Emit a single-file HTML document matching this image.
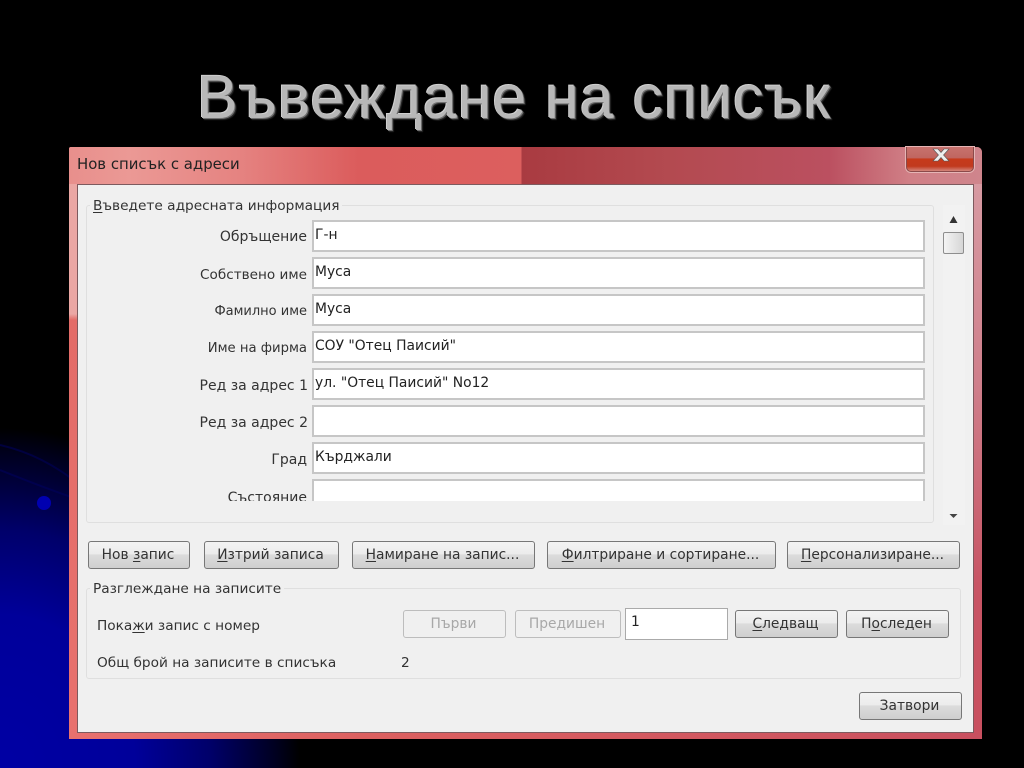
<!DOCTYPE html>
<html lang="bg"><head><meta charset="utf-8"><title>Въвеждане на списък</title>
<style>
*{box-sizing:border-box}
html,body{margin:0;padding:0}
body{width:1024px;height:768px;overflow:hidden;position:relative;background:#000;font-family:"DejaVu Sans","Liberation Sans",sans-serif}
#wrap{position:absolute;left:0;top:0;width:1024px;height:768px;filter:blur(.35px)}
#bg{position:absolute;left:0;top:0;width:1024px;height:768px;background:radial-gradient(ellipse 300px 340px at 0 768px,#0000a4 0,#00009a 45%,#00006a 70%,#000020 92%,#000 100%)}
#swoosh{position:absolute;left:0;top:0}
h1{position:absolute;left:197px;top:62px;margin:0;font:400 61px/70px "Liberation Sans",sans-serif;color:#b8b8b8;white-space:nowrap;text-shadow:1px 1px 0 #707070,-1px -1px 0 #cfcfcf,2px 2px 1px #2a2a2a;letter-spacing:.95px}
#win{position:absolute;left:69px;top:147px;width:913px;height:592px;background:#dd6664;border-radius:2px 5px 0 0;overflow:hidden}
#t1{position:absolute;left:0;top:0;width:913px;height:37px;background:linear-gradient(90deg,#e88f8c 0,#eb9995 60px,#e58381 170px,#db5c5c 290px,#dc5f5e 452px,#a93b41 453px,#b34a50 600px,#bb5060 760px,#d07f86 840px,#cf858c 913px)}
#side-l{position:absolute;left:0;top:37px;width:8px;height:555px;background:linear-gradient(180deg,#eba7a4 0,#eba7a4 130px,#e36c68 136px,#e8716e 555px)}
#side-r{position:absolute;right:0;top:37px;width:8px;height:555px;background:linear-gradient(180deg,#d79aa2 0,#cf7f8b 200px,#c85565 400px,#c9505f 555px)}
#bot{position:absolute;left:0;bottom:0;width:913px;height:6px;background:linear-gradient(90deg,#e8716e 0,#dc6060 300px,#c9505f 913px)}
#client{position:absolute;left:77px;top:184px;width:897px;height:549px;background:#f0f0f0;border:1px solid #7d5a5e}
#title{position:absolute;left:77px;top:155px;font-size:14.9px;line-height:18px;color:#222;white-space:nowrap}
#close{position:absolute;left:906px;top:147px;width:68px;height:25px;border:1px solid #8b4a4a;border-top:0;border-radius:0 0 5px 5px;background:linear-gradient(180deg,#c7726e 0,#c06660 45%,#c63a1c 50%,#c13a1e 80%,#d4857c 100%);box-shadow:0 0 0 1px #e6b5b5}
#close svg{position:absolute;left:23px;top:1px}
.a{position:absolute;white-space:nowrap;color:#333;font-size:13.7px;line-height:18px}
.l{font-size:14px}
.r{text-align:right}
.gb{position:absolute;border:1px solid #dfdfdf;border-radius:3px}
.in{position:absolute;left:312px;width:613px;height:32px;background:#fff;border:2px solid #c6c6c6;font-size:13.85px;line-height:18px;color:#222;padding:4px 0 0 1px;white-space:nowrap}
.b{position:absolute;height:28px;border:1px solid #777;border-radius:3px;background:linear-gradient(180deg,#f3f3f3 0,#ececec 45%,#dcdcdc 50%,#cfcfcf 100%);font-size:13.8px;line-height:26px;text-align:center;color:#333;white-space:nowrap;padding-right:2px}
.k{line-height:27px}
.d{border-color:#bdbdbd;background:#f0f0f0;color:#a8a8a8}
u{text-decoration-thickness:1px;text-underline-offset:2px}
</style></head><body><div id="wrap">
<div id="bg"></div>
<svg id="swoosh" width="80" height="768" viewBox="0 0 80 768" fill="none"><path d="M0 445C30 452 55 465 80 485" stroke="#000050" stroke-width="2" opacity=".7"/><path d="M0 470C25 480 50 490 80 500" stroke="#00005c" stroke-width="2" opacity=".6"/><circle cx="44" cy="503" r="7" fill="#0000b0"/></svg>
<h1>Въвеждане на списък</h1>
<div id="win"><div id="t1"></div><div id="side-l"></div><div id="side-r"></div><div id="bot"></div></div>
<div id="client"></div>
<div id="title">Нов списък с адреси</div>
<div id="close"><svg width="22" height="14" viewBox="0 0 22 14"><path d="M3 1H8L11 4.500 14 1H19L13.500 7 19 13H14L11 9.500 8 13H3L8.500 7Z" fill="#eee" stroke="#555" stroke-width=".6"/></svg></div>

<div class="gb" style="left:86px;top:205px;width:848px;height:318px"></div>
<div class="a" style="left:90px;top:197px;background:#f0f0f0;padding:0 3px"><u>В</u>ъведете адресната информация</div>

<div class="in" style="top:220px">Г-н</div>
<div class="in" style="top:257px">Муса</div>
<div class="in" style="top:294px">Муса</div>
<div class="in" style="top:331px">СОУ "Отец Паисий"</div>
<div class="in" style="top:368px">ул. "Отец Паисий" No12</div>
<div class="in" style="top:405px"></div>
<div class="in" style="top:442px">Кърджали</div>
<div class="in" style="top:479px;height:22px;border-bottom:0"></div>

<div class="a r l" style="left:100px;width:207px;top:228px">Обръщение</div>
<div class="a r l" style="left:100px;width:207px;top:266px;font-size:13.6px">Собствено име</div>
<div class="a r l" style="left:100px;width:207px;top:303px;font-size:13px">Фамилно име</div>
<div class="a r l" style="left:100px;width:207px;top:340px;font-size:13.2px">Име на фирма</div>
<div class="a r l" style="left:100px;width:208px;top:377px">Ред за адрес 1</div>
<div class="a r l" style="left:100px;width:208px;top:414px">Ред за адрес 2</div>
<div class="a r l" style="left:100px;width:207px;top:451px">Град</div>
<div class="a r l" style="left:100px;width:207px;top:489px;height:12px;overflow:hidden">Състояние</div>

<div style="position:absolute;left:943px;top:205px;width:22px;height:320px;background:#f2f2f2"></div>
<svg style="position:absolute;left:943px;top:205px" width="22" height="320"><path d="M10.500 11L6.500 18H14.500Z" fill="#333"/><path d="M6.500 309H14.500L10.500 313Z" fill="#444"/></svg>
<div style="position:absolute;left:943px;top:232px;width:21px;height:22px;border:1px solid #8e8e8e;border-radius:2px;background:linear-gradient(90deg,#f4f4f4,#d6d6d6)"></div>

<div class="b" style="left:88px;top:541px;width:102px">Нов <u>з</u>апис</div>
<div class="b" style="left:204px;top:541px;width:135px"><u>И</u>зтрий записа</div>
<div class="b" style="left:352px;top:541px;width:183px"><u>Н</u>амиране на запис...</div>
<div class="b" style="left:547px;top:541px;width:229px"><u>Ф</u>илтриране и сортиране...</div>
<div class="b" style="left:787px;top:541px;width:173px"><u>П</u>ерсонализиране...</div>

<div class="gb" style="left:86px;top:588px;width:875px;height:91px"></div>
<div class="a" style="left:90px;top:580px;background:#f0f0f0;padding:0 3px">Разглеждане на записите</div>
<div class="a" style="left:97px;top:617px">Пока<u>ж</u>и запис с номер</div>
<div class="a" style="left:97px;top:654px">Общ брой на записите в списъка</div>
<div class="a" style="left:401px;top:654px">2</div>

<div class="b d k" style="left:403px;top:610px;width:103px">Първи</div>
<div class="b d k" style="left:515px;top:610px;width:106px">Предишен</div>
<div class="in" style="left:625px;top:608px;width:103px;height:32px;border:1px solid #aaa;padding:4px 0 0 5px">1</div>
<div class="b k" style="left:735px;top:610px;width:103px"><u>С</u>ледващ</div>
<div class="b k" style="left:846px;top:610px;width:103px">П<u>о</u>следен</div>
<div class="b k" style="left:859px;top:692px;width:103px">Затвори</div>
</div></body></html>
